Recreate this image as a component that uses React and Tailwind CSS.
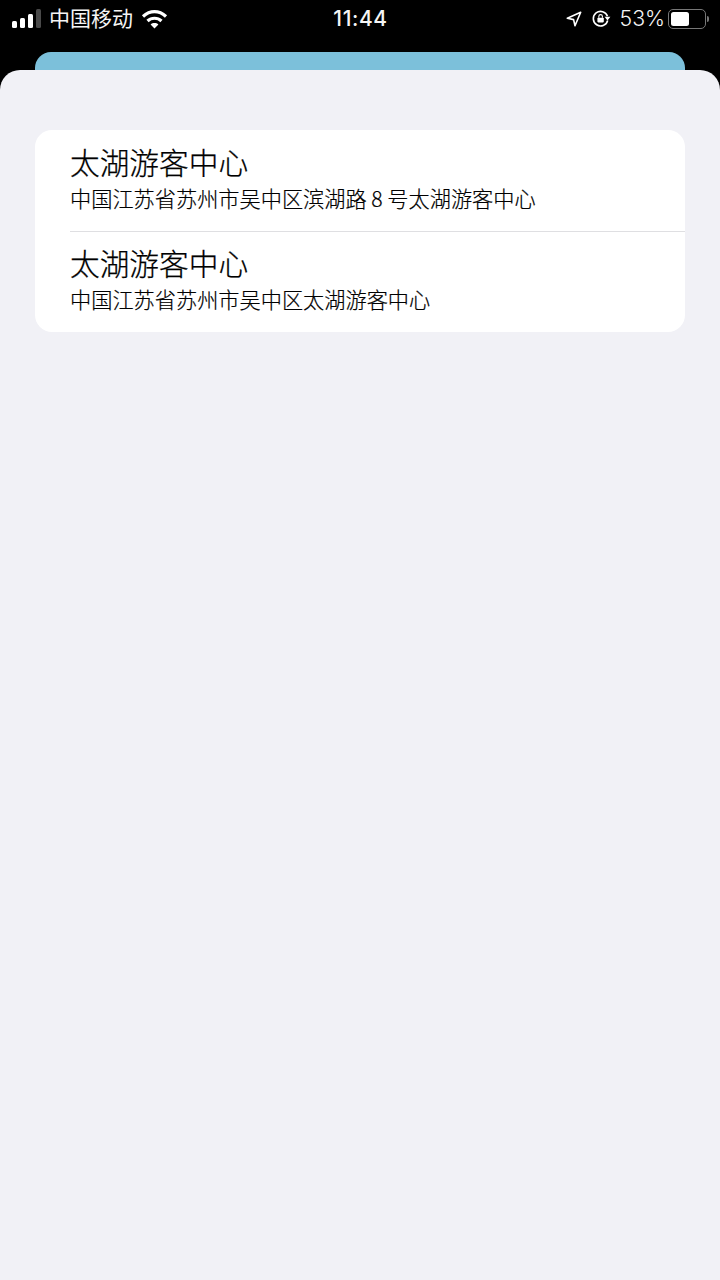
const font = { fontFamily: '"Noto Sans CJK SC", "Liberation Sans", sans-serif' };

function Row({ sub, divider }) {
  return (
    <div className="relative h-[101px] flex flex-col pl-[35px] pt-[14px]">
      <div className="text-[29.7px] leading-[36px] text-black font-light [-webkit-text-stroke:0.25px_#000]">太湖游客中心</div>
      <div className="text-[21.2px] leading-[30px] text-black mt-[3px] font-light [-webkit-text-stroke:0.2px_#000]">{sub}</div>
      {divider && <div className="absolute left-[35px] right-0 bottom-[-1px] h-px bg-[#dfdfe2]" />}
    </div>
  );
}

export default function App() {
  return (
    <div className="relative w-[720px] h-[1280px] bg-black overflow-hidden" style={font}>
      <div className="h-[37px] grid grid-cols-[1fr_auto_1fr] items-center pl-[12px] pr-[11px] text-white">
        <div className="flex items-center">
          <div className="flex items-end gap-[3px] h-[19px]">
            <div className="w-[5px] h-[7px] rounded-[1.5px] bg-white" />
            <div className="w-[5px] h-[10px] rounded-[1.5px] bg-white" />
            <div className="w-[5px] h-[14px] rounded-[1.5px] bg-white" />
            <div className="w-[5px] h-[19px] rounded-[1.5px] bg-[#4a4a4a]" />
          </div>
          <div className="ml-[8px] mb-[3px] text-[21px] leading-[30px] text-[#f5f5f5] font-normal">中国移动</div>
          <svg className="ml-[8px]" width="27" height="20" viewBox="0 0 27 20" fill="none" stroke="#fff" strokeWidth="3.2">
            <path d="M2 7.5C9 1 18 1 25 7.5" />
            <path d="M6.5 12C10.5 8.3 16.5 8.3 20.5 12" />
            <path d="M13.5 19.5L9.6 15.4C11.8 13.6 15.2 13.6 17.4 15.4Z" fill="#fff" stroke="none" />
          </svg>
        </div>
        <div className="text-[21px] leading-[30px] tracking-[0.6px] font-['Inter',sans-serif] font-medium text-[#f5f5f5]">11:44</div>
        <div className="flex items-center justify-end">
          <svg width="16" height="16" viewBox="0 0 16 16" fill="none" stroke="#fff" strokeWidth="1.6" strokeLinejoin="round">
            <path d="M1.3 7.2L14.7 1.3L9 14.7L7.6 8.6Z" />
          </svg>
          <svg className="ml-[9px]" width="20" height="19" viewBox="0 0 20 19" fill="none">
            <path d="M16.5 7.2A7.3 7.3 0 1 0 16.7 11.5" stroke="#fff" strokeWidth="1.6" />
            <path d="M13.6 7.8H19.4L16.5 11.5Z" fill="#fff" />
            <rect x="6.4" y="8.8" width="6.4" height="4.6" rx="0.8" fill="#fff" />
            <path d="M7.8 8.8V7.4A1.8 1.8 0 0 1 11.4 7.4V8.8" stroke="#fff" strokeWidth="1.1" />
          </svg>
          <div className="ml-[9px] mb-[1px] text-[21.3px] leading-[30px] font-['Inter',sans-serif] font-light text-[#f5f5f5]">53%</div>
          <div className="ml-[3px] w-[38px] h-[20px] rounded-[5px] border-[1.5px] border-[#777] p-[2px]">
            <div className="w-[18px] h-full rounded-[2.5px] bg-white" />
          </div>
          <div className="ml-[1px] w-[2px] h-[6px] rounded-r-[2px] bg-[#777]" />
        </div>
      </div>
      <div className="h-[33px] mt-[15px] mx-[35px] rounded-t-[16px] bg-[#7cc0da]" />
      <div className="absolute left-0 right-0 top-[70px] bottom-0 rounded-t-[20px] bg-[#f1f1f6] px-[35px] pt-[60px]">
        <div className="bg-white rounded-[17px] overflow-hidden">
          <Row sub="中国江苏省苏州市吴中区滨湖路 8 号太湖游客中心" divider />
          <Row sub="中国江苏省苏州市吴中区太湖游客中心" />
        </div>
      </div>
    </div>
  );
}
